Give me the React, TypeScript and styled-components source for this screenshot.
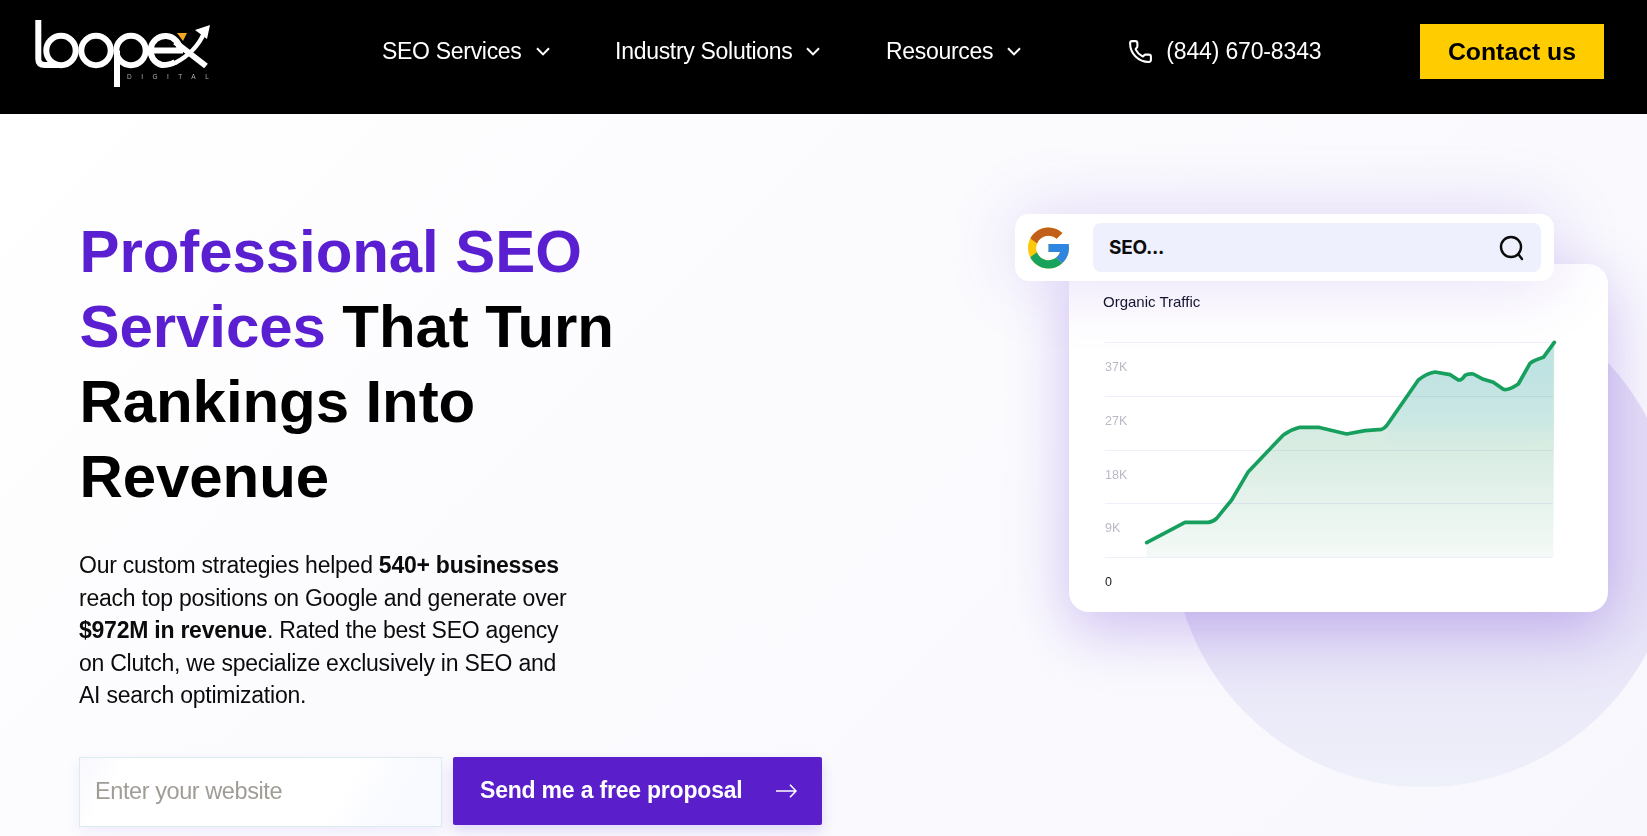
import React from "react";
import styled, { createGlobalStyle } from "styled-components";
import { Phone } from "lucide-react";

const GlobalStyle = createGlobalStyle`
  html, body {
    margin: 0;
    padding: 0;
    height: 100%;
    overflow: hidden;
  }
  body {
    font-family: "Liberation Sans", Arial, sans-serif;
    background: #fff;
  }
  * {
    box-sizing: border-box;
  }
`;

const Page = styled.div`
  height: 836px;
  display: flex;
  flex-direction: column;
  overflow: hidden;
`;

const Header = styled.header`
  height: 114px;
  flex: none;
  background: #000;
  display: flex;
  align-items: center;
  padding: 0 43px 0 34px;
`;

const LogoMark = styled.svg`
  width: 192px;
  height: 70px;
  margin-right: 156px;
  margin-top: -6px;
  flex: none;
`;

const NavList = styled.nav`
  display: flex;
  align-items: center;
  gap: 65.5px;
`;

const NavItem = styled.a`
  display: flex;
  align-items: center;
  gap: 14px;
  color: #fff;
  font-size: 23px;
  letter-spacing: -0.3px;
  margin-top: -12px;
`;

const PhoneLink = styled.a`
  display: flex;
  align-items: center;
  gap: 13px;
  margin-left: 107px;
  margin-top: -12px;
  color: #fff;
  font-size: 23px;
  letter-spacing: -0.15px;
`;

const ContactButton = styled.button`
  margin-left: auto;
  width: 184px;
  height: 55px;
  margin-top: -11px;
  border: 0;
  background: #ffcc00;
  color: #000;
  font: 700 24.8px "Liberation Sans", Arial, sans-serif;
`;

const Hero = styled.main`
  position: relative;
  flex: 1;
  display: flex;
  justify-content: space-between;
  padding: 100px 39px 0 79px;
  background: linear-gradient(135deg, #ffffff 0%, #fbfbfe 45%, #f8f7fd 100%);
`;

const Circle = styled.div`
  position: absolute;
  left: 1172px;
  top: 169px;
  width: 504px;
  height: 504px;
  border-radius: 50%;
  background: linear-gradient(180deg, #e4def6 55%, #eef0fa 100%);
`;

const Copy = styled.section`
  position: relative;
  width: 760px;
`;

const Title = styled.h1`
  margin: 0 0 35px 0.5px;
  font-size: 60px;
  line-height: 75px;
  font-weight: 700;
  letter-spacing: -0.08px;
  color: #000;
`;

const Accent = styled.span`
  color: #5a1fd0;
`;

const Lead = styled.p`
  margin: 0 0 45px;
  font-size: 23px;
  line-height: 32.5px;
  letter-spacing: -0.24px;
  color: #0b0b0b;
`;

const LeadForm = styled.form`
  display: flex;
  align-items: flex-start;
  gap: 11px;
`;

const WebsiteInput = styled.input`
  width: 363px;
  height: 70px;
  padding: 0 15px;
  border: 1px solid #dcebee;
  background: linear-gradient(120deg, #f8f8fe 0%, #ffffff 12%, #ffffff 70%, #f9faff 85%);
  box-shadow: 0 6px 14px rgba(90, 31, 208, 0.07);
  outline: 0;
  font: 400 23.5px "Liberation Sans", Arial, sans-serif;
  letter-spacing: -0.42px;

  &::placeholder {
    color: #a09c96;
    opacity: 1;
  }
`;

const SendButton = styled.button`
  width: 369px;
  height: 68px;
  padding: 0 25px 0 27px;
  display: flex;
  align-items: center;
  justify-content: space-between;
  border: 0;
  border-radius: 2px;
  background: #5a1fcb;
  box-shadow: 0 6px 14px rgba(90, 31, 208, 0.16);
  color: #fff;
  font: 700 23px "Liberation Sans", Arial, sans-serif;
  letter-spacing: -0.2px;
`;

const Visual = styled.section`
  position: relative;
  width: 593px;
  display: flex;
  flex-direction: column;
  align-items: flex-start;
`;

const SearchBar = styled.div`
  position: relative;
  z-index: 2;
  width: 539px;
  height: 67px;
  padding: 9px 13px;
  display: flex;
  align-items: center;
  gap: 24px;
  background: #fff;
  border-radius: 14px;
  box-shadow: 0 0 70px rgba(90, 31, 208, 0.17);
`;

const SearchField = styled.div`
  flex: 1;
  height: 49px;
  padding: 0 16px 0 16px;
  display: flex;
  align-items: center;
  justify-content: space-between;
  background: #eff0fd;
  border-radius: 8px;
  color: #0c0c0c;
  font: 700 19px Inter, "Liberation Sans", sans-serif;
  letter-spacing: -0.3px;
`;

const Card = styled.div`
  width: 539px;
  height: 348px;
  margin: -17px 0 0 54px;
  padding: 30px 55px 0 36px;
  background: #fff;
  border-radius: 20px;
  box-shadow: 0 18px 60px rgba(90, 31, 208, 0.27);
`;

const CardTitle = styled.div`
  margin-left: -2px;
  font-size: 15px;
  line-height: 16px;
  color: #14142a;
`;

const Chart = styled.div`
  position: relative;
  margin-top: 32px;
`;

const GridRow = styled.div`
  height: 53.75px;
  padding-top: 16px;
  border-top: 1px solid #f1f0fa;
  font-size: 12.5px;
  line-height: 16px;
  color: #b9b9c8;
`;

const ZeroRow = styled(GridRow)`
  color: #1c1c1c;
`;

const ChartLines = styled.svg`
  position: absolute;
  left: 0;
  top: 0;
  width: 455px;
  height: 220px;
  overflow: visible;
  mix-blend-mode: multiply;
`;

const rows = ["37K", "27K", "18K", "9K"];

const linePath =
  "M260,638 L375,577 L445,577 Q460,575 470,565 L515,510 L565,425 L670,315 Q695,298 720,292 L775,292 L860,312 L915,302 L965,298 Q975,295 985,280 L1075,150 Q1100,130 1125,126 L1170,134 L1195,150 Q1205,152 1215,136 Q1225,130 1240,132 L1270,148 L1300,157 L1330,178 Q1345,182 1375,162 L1410,100 Q1420,92 1450,82 L1483,37";

// bluish patch under the top of the curve, fades out towards the green
const tealPatch =
  "M985,280 L1075,150 Q1100,130 1125,126 L1170,134 L1195,150 Q1205,152 1215,136 Q1225,130 1240,132 L1270,148 L1300,157 L1330,178 Q1345,182 1375,162 L1410,100 Q1420,92 1450,82 L1480,40 L1480,330 L1320,350 L1180,375 L1100,390 L975,380 Z";

const Chevron = () => (
  <svg width="14" height="9" viewBox="0 0 14 9" fill="none" stroke="currentColor" strokeWidth="2">
    <path d="M1 1.2 L7 7.4 L13 1.2" />
  </svg>
);

const Logo = () => (
  <LogoMark viewBox="0 0 192 70" fill="none">
    <g stroke="#fff" strokeWidth="6">
      <path d="M4.3 1 V40 Q4.3 46 11 46 H25" />
      <circle cx="27" cy="31.5" r="14.7" />
      <circle cx="62" cy="31.5" r="14.7" />
      <circle cx="97" cy="31.5" r="14.7" />
      <path d="M83 31.5 V68" />
      <path d="M117 31.5 H146 A14.7 14.7 0 1 0 128 46 Q136 46 141 43" />
      <path d="M141 23 L172 47" />
      <path d="M141 44 Q162 33 170 14" strokeWidth="4.5" />
    </g>
    <path d="M176 6 L161 11 L173 20 Z" fill="#fff" />
    <path d="M143 14 H153 L149 22 Z" fill="#f5a623" />
    <text x="93" y="60" fill="#b0b0b0" fontSize="6.5" letterSpacing="9.5" fontFamily="Liberation Sans, sans-serif">
      DIGITAL
    </text>
  </LogoMark>
);

const GoogleMark = () => (
  <svg width="41" height="42" viewBox="4 4 40 40" style={{ flex: "none" }}>
    <path
      fill="#fdc90a"
      d="M43.611,20.083H42V20H24v8h11.303c-1.649,4.657-6.08,8-11.303,8c-6.627,0-12-5.373-12-12c0-6.627,5.373-12,12-12c3.059,0,5.842,1.154,7.961,3.039l5.657-5.657C34.046,6.053,29.268,4,24,4C12.955,4,4,12.955,4,24c0,11.045,8.955,20,20,20c11.045,0,20-8.955,20-20C44,22.659,43.862,21.35,43.611,20.083z"
    />
    <path
      fill="#c1601a"
      d="M6.306,14.691l6.571,4.819C14.655,15.108,18.961,12,24,12c3.059,0,5.842,1.154,7.961,3.039l5.657-5.657C34.046,6.053,29.268,4,24,4C16.318,4,9.656,8.337,6.306,14.691z"
    />
    <path
      fill="#17a35d"
      d="M24,44c5.166,0,9.86-1.977,13.409-5.192l-6.19-5.238C29.211,35.091,26.715,36,24,36c-5.202,0-9.619-3.317-11.283-7.946l-6.522,5.025C9.505,39.556,16.227,44,24,44z"
    />
    <path
      fill="#2f86e0"
      d="M43.611,20.083H42V20H24v8h11.303c-0.792,2.237-2.231,4.166-4.087,5.571c0.001-0.001,0.002-0.001,0.003-0.002l6.19,5.238C36.971,39.205,44,34,44,24C44,22.659,43.862,21.35,43.611,20.083z"
    />
  </svg>
);

export default function App() {
  return (
    <Page>
      <GlobalStyle />
      <Header>
        <Logo />
        <NavList>
          <NavItem>
            SEO Services <Chevron />
          </NavItem>
          <NavItem>
            Industry Solutions <Chevron />
          </NavItem>
          <NavItem>
            Resources <Chevron />
          </NavItem>
        </NavList>
        <PhoneLink>
          <Phone size={25} strokeWidth={2} />
          (844) 670-8343
        </PhoneLink>
        <ContactButton>Contact us</ContactButton>
      </Header>
      <Hero>
        <Circle />
        <Copy>
          <Title>
            <Accent>Professional SEO</Accent>
            <br />
            <Accent>Services</Accent> That Turn
            <br />
            Rankings Into
            <br />
            Revenue
          </Title>
          <Lead>
            Our custom strategies helped <strong>540+ businesses</strong>
            <br />
            reach top positions on Google and generate over
            <br />
            <strong>$972M in revenue</strong>. Rated the best SEO agency
            <br />
            on Clutch, we specialize exclusively in SEO and
            <br />
            AI search optimization.
          </Lead>
          <LeadForm>
            <WebsiteInput placeholder="Enter your website" />
            <SendButton type="button">
              Send me a free proposal
              <svg width="21" height="14" viewBox="0 0 21 14" fill="none" stroke="#fff" strokeWidth="1.6">
                <path d="M0 7 H20 M14 0.8 L20 7 L14 13.2" />
              </svg>
            </SendButton>
          </LeadForm>
        </Copy>
        <Visual>
          <SearchBar>
            <GoogleMark />
            <SearchField>
              SEO...
              <svg width="26" height="26" viewBox="0 0 26 26" fill="none" stroke="#0c0c0c" strokeWidth="2.4">
                <circle cx="12" cy="12" r="10" />
                <path d="M19.5 19.5 L23 24" strokeLinecap="round" />
              </svg>
            </SearchField>
          </SearchBar>
          <Card>
            <CardTitle>Organic Traffic</CardTitle>
            <Chart>
              {rows.map((label) => (
                <GridRow key={label}>{label}</GridRow>
              ))}
              <ZeroRow>0</ZeroRow>
              <ChartLines viewBox="135 36 1365 660" fill="none">
                <defs>
                  <linearGradient id="trafficFill" x1="0" y1="0" x2="0" y2="1">
                    <stop offset="0" stopColor="#cde8dc" />
                    <stop offset="0.5" stopColor="#d8ece2" />
                    <stop offset="1" stopColor="#f4faf7" />
                  </linearGradient>
                  <linearGradient id="tealFade" gradientUnits="userSpaceOnUse" x1="0" y1="120" x2="0" y2="380">
                    <stop offset="0" stopColor="#bfe2e2" />
                    <stop offset="0.6" stopColor="#cbe8e4" />
                    <stop offset="1" stopColor="#d8ece2" stopOpacity="0" />
                  </linearGradient>
                </defs>
                <path d={`${linePath} L1480,682 L260,682 Z`} fill="url(#trafficFill)" />
                <path d={tealPatch} fill="url(#tealFade)" />
                <path d={linePath} stroke="#17a05d" strokeWidth="11" strokeLinejoin="round" strokeLinecap="round" />
              </ChartLines>
            </Chart>
          </Card>
        </Visual>
      </Hero>
    </Page>
  );
}
